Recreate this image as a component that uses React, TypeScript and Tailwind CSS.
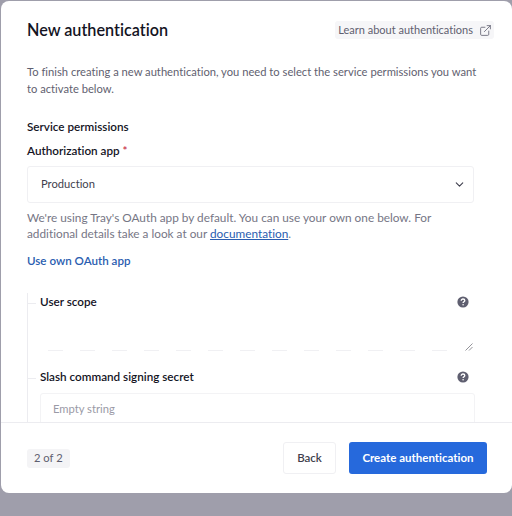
import { ChevronDown, ExternalLink } from 'lucide-react'

function HelpIcon() {
  return (
    <svg width="12" height="12" viewBox="0 0 12 12" aria-hidden="true" className="shrink-0">
      <circle cx="6" cy="6" r="5.6" fill="#5f5f70" />
      <path d="M4.2 4.7C4.2 3.6 5 3 6 3s1.8.6 1.8 1.5c0 1.2-1.7 1.3-1.7 2.5" fill="none" stroke="white" strokeWidth="1.3" />
      <circle cx="6.1" cy="8.8" r="0.8" fill="white" />
    </svg>
  )
}

export default function App() {
  return (
    <div className="h-[516px] w-[512px] overflow-hidden bg-[#9f9eab] pl-px pt-px font-['Lato',sans-serif] [font-variant-ligatures:none]">
      <div className="flex h-[492px] w-[511px] flex-col rounded-lg bg-white">
        {/* Header */}
        <div className="flex items-center justify-between pl-[26px] pr-[18px] pt-[20px]">
          <h2 className="text-[16.2px] leading-[18px] font-semibold text-[#14141f]">New authentication</h2>
          <a className="flex h-[18px] items-center gap-[6px] rounded-[3px] bg-[#f6f6f8] pl-[3px] pr-[2px] text-[11px] text-[#5f5f70]">
            Learn about authentications
            <ExternalLink size={13} strokeWidth={1.5} />
          </a>
        </div>

        {/* Scrolling content */}
        <div className="min-h-0 flex-1 overflow-hidden pl-[26px] pr-[38px] pt-[24px]">
          <p className="w-[455px] text-[11.2px] leading-[17px] text-[#5f5f70]">
            To finish creating a new authentication, you need to select the service permissions you want to activate below.
          </p>

          <div className="mt-[20px] text-[11.7px] leading-[18px] font-semibold text-[#14141f]">Service permissions</div>
          <label className="mt-[6px] block text-[11.7px] leading-[18px] font-semibold text-[#14141f]">
            Authorization app <span className="text-[#c9304a]">*</span>
          </label>

          <div className="mt-[7px] flex h-[37px] w-[447px] items-center justify-between rounded-[3px] border border-[#f0f0f3] pl-[13px] pr-[7px] text-[11.2px] text-[#3f3f4e]">
            Production
            <ChevronDown size={13} strokeWidth={2} className="text-[#3f3f4e]" />
          </div>

          <p className="mt-[7px] w-[425px] text-[11.8px] leading-[16px] text-[#767685]">
            We're using Tray's OAuth app by default. You can use your own one below. For additional details take a look at our{' '}
            <a className="text-[#2a5db0] underline">documentation</a>.
          </p>

          <a className="mt-[10px] block text-[11.6px] leading-[18px] font-semibold text-[#2a5db0]">Use own OAuth app</a>

          {/* Nested fields */}
          <div className="mt-[23px] w-[448px] border-l border-[#ececf0] pl-[12px]">
            <div className="relative flex h-[18px] items-center justify-between pr-[6px] text-[11.7px] font-semibold text-[#14141f]">
              <span className="absolute -left-[12px] top-[10px] h-px w-2 bg-[#ececf0]" />
              User scope
              <HelpIcon />
            </div>
            <div className="relative mt-[8px] h-[32px]">
              <div className="absolute bottom-0 left-[8px] right-[27px] h-px bg-[repeating-linear-gradient(90deg,#f0f0f3_0_15px,transparent_15px_32px)]" />
              <svg width="8" height="8" viewBox="0 0 8 8" aria-hidden="true" className="absolute right-[2px] bottom-0">
                <path d="M0.5 7.5L7.5 0.5M4 7.5L7.5 4" stroke="#77777f" strokeWidth="0.8" />
              </svg>
            </div>

            <div className="relative mt-[17px] flex h-[18px] items-center justify-between pr-[6px] text-[11.7px] font-semibold text-[#14141f]">
              <span className="absolute -left-[12px] top-[10px] h-px w-2 bg-[#ececf0]" />
              Slash command signing secret
              <HelpIcon />
            </div>
            <div className="mt-[7px] flex h-[32px] items-center rounded-[3px] border border-[#f3f3f5] pl-[12px] text-[11.2px] text-[#9a9aa6]">
              Empty string
            </div>
          </div>
        </div>

        {/* Footer */}
        <div className="flex h-[71px] shrink-0 items-center justify-between border-t border-[#ececf0] pl-[26px] pr-[25px]">
          <span className="flex h-[19px] items-center rounded-[3px] bg-[#f4f4f6] px-[7px] text-[11.2px] text-[#5f5f70]">2 of 2</span>
          <div className="flex items-center gap-[13px]">
            <button className="h-[32px] w-[53px] rounded-[3px] border border-[#f0f0f3] bg-white text-[11.5px] font-semibold text-[#3f3f4e]">Back</button>
            <button className="h-[32px] w-[138px] rounded-[3px] bg-[#2669dc] text-[11.5px] font-bold text-white">Create authentication</button>
          </div>
        </div>
      </div>
    </div>
  )
}
